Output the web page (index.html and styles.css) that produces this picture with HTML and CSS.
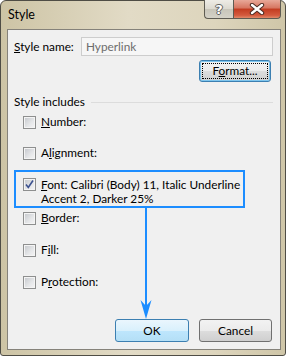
FILE: index.html
```html
<!DOCTYPE html>
<html lang="en">
<head>
    <meta charset="UTF-8">
    <meta name="viewport" content="width=device-width, initial-scale=1.0">
    <title>Style</title>
    <link rel="stylesheet" href="styles.css">
</head>
<body>
    <div class="window">
        <div class="titlebar">
            <span class="title">Style</span>
            <div class="caption-buttons">
                <span class="cap-btn help">?</span>
                <span class="cap-btn close">
                    <svg width="16" height="12" viewBox="0 0 16 12">
                        <path d="M3 2 L13 10 M13 2 L3 10" stroke="#4a2a22" stroke-width="4.4" stroke-linecap="round"/>
                        <path d="M3 2 L13 10 M13 2 L3 10" stroke="#ffffff" stroke-width="2.4" stroke-linecap="round"/>
                    </svg>
                </span>
            </div>
        </div>

        <div class="client">
            <div class="name-row">
                <label><u>S</u>tyle name:</label>
                <div class="name-input">Hyperlink</div>
            </div>
            <div class="format-row">
                <button class="btn btn-focus"><span class="focus-rect">F<u>o</u>rmat...</span></button>
            </div>

            <div class="group-title"><span>Style includes</span></div>

            <div class="includes">
                <div class="item item-number"><span class="check"></span><span><u>N</u>umber:</span></div>
                <div class="item item-align"><span class="check"></span><span>A<u>l</u>ignment:</span></div>
                <div class="item item-font">
                    <span class="check checked">
                        <svg width="11" height="11" viewBox="0 0 11 11">
                            <path d="M2 5.5 L4.3 8.5 L9 1.5" stroke="#3d5290" stroke-width="1.6" fill="none"/>
                        </svg>
                    </span>
                    <span class="font-text"><u>F</u>ont: Calibri (Body) 11, Italic Underline<br>Accent 2, Darker 25%</span>
                </div>
                <div class="item item-border"><span class="check"></span><span><u>B</u>order:</span></div>
                <div class="item item-fill"><span class="check"></span><span>F<u>i</u>ll:</span></div>
                <div class="item item-protect"><span class="check"></span><span>P<u>r</u>otection:</span></div>
            </div>

            <div class="actions">
                <button class="btn btn-ok">OK</button>
                <button class="btn btn-cancel">Cancel</button>
            </div>

            <!-- callout arrow from the highlighted option to OK -->
            <svg class="arrow" width="12" height="113" viewBox="0 0 12 113">
                <rect x="5" y="0" width="2" height="100" fill="#1c8dff"/>
                <path d="M0.5 93 L6 99 L11.5 93 L6 112 Z" fill="#1c8dff"/>
            </svg>
        </div>
    </div>
</body>
</html>
```

FILE: styles.css
```css
body {
    margin: 0;
    padding: 0;
    background-color: #ffffff;
    font-family: Lato, "Noto Sans", sans-serif;
    font-size: 11.8px;
    color: #000;
}

.window {
    width: 286px;
    height: 356px;
    box-sizing: border-box;
    border: 1px solid #4f4d45;
    border-radius: 6px 6px 3px 3px;
    background: linear-gradient(to right, #cdc4a5, #e2dbc6 45%, #ddd5bd 75%, #cfc6a8);
    display: flex;
    flex-direction: column;
}

.titlebar {
    height: 28px;
    display: flex;
    align-items: flex-start;
    padding-left: 7px;
}
.title {
    margin-top: 6px;
    line-height: 16px;
    font-size: 12.5px;
}

.caption-buttons {
    margin-left: auto;
    margin-right: 4px;
    margin-top: -1px;
    display: flex;
}
.cap-btn {
    height: 19px;
    box-sizing: border-box;
    border: 1px solid #5e5b52;
    border-top: none;
    display: flex;
    align-items: center;
    justify-content: center;
}
.help {
    width: 29px;
    border-radius: 0 0 0 4px;
    border-right: none;
    background: linear-gradient(#eeece6, #dcd9cf 50%, #c8c5b9 51%, #d5d2c7);
    color: #fff;
    font-weight: bold;
    font-size: 13px;
    font-family: "DejaVu Sans", sans-serif;
    text-shadow: 0 0 1px #555, 1px 0 0 #666, -1px 0 0 #666, 0 1px 0 #666, 0 -1px 0 #666;
}
.close {
    width: 48px;
    border-radius: 0 0 4px 0;
    background: linear-gradient(#e8a898, #d67560 45%, #c23b20 50%, #d45a3e 85%, #e08a6a);
}

.client {
    position: relative;
    flex: 1;
    margin: 0 4px 5px 6px;
    border: 1px solid #85827a;
    background-color: #f0f0f0;
    padding: 0 7px 0 6px;
}

.name-row {
    margin-top: 7px;
    height: 19px;
    display: flex;
    align-items: center;
}
.name-input {
    margin-left: auto;
    width: 192px;
    height: 19px;
    box-sizing: border-box;
    border: 1px solid #cdcdcd;
    background-color: #f6f6f6;
    color: #6d6d6d;
    padding-left: 4px;
    line-height: 17px;
}

.format-row {
    margin-top: 4px;
    display: flex;
    justify-content: flex-end;
    padding-right: 2px;
}

.btn {
    font-family: inherit;
    font-size: 11.8px;
    color: #000;
    height: 22px;
    box-sizing: border-box;
    border: 1px solid #707070;
    border-radius: 3px;
    background: linear-gradient(#f2f2f2, #ebebeb 50%, #dddddd 51%, #cfcfcf);
    padding: 0;
    margin: 0;
}
.btn-focus {
    width: 72px;
    border-color: #3c7fb1;
    box-shadow: inset 0 0 0 1px #7fc6ee;
    padding: 2px;
}
.focus-rect {
    display: block;
    height: 16px;
    line-height: 15px;
    outline: 1px dotted #000;
    outline-offset: -1px;
}

.group-title {
    margin-top: 12px;
    line-height: 16px;
    display: flex;
    align-items: center;
}
.group-title::after {
    content: "";
    flex: 1;
    height: 1px;
    background-color: #dcdcdc;
    margin-left: 6px;
}

.includes {
    display: flex;
    flex-direction: column;
}
.item {
    display: flex;
    align-items: center;
    height: 16px;
    line-height: 16px;
    padding-left: 9px;
}
.item-number { margin-top: 4px; }
.item-align { margin-top: 15px; }
.item-border { margin-top: 2px; }
.item-fill { margin-top: 16px; }
.item-protect { margin-top: 16px; }

.item-font {
    margin-top: 9px;
    height: auto;
    width: 231px;
    box-sizing: border-box;
    border: 2px solid #1c8dff;
    padding: 6px 0 0 7px;
    align-items: flex-start;
}
.font-text {
    line-height: 14px;
    white-space: nowrap;
}
.item-font .check {
    margin-top: 0;
}

.check {
    width: 13px;
    height: 13px;
    box-sizing: border-box;
    border: 1px solid #8e8f8f;
    box-shadow: inset 0 0 0 1px #f4f4f4;
    background: linear-gradient(135deg, #c3c6cb, #e6e7e9 60%, #f5f5f5);
    margin-right: 5px;
    flex-shrink: 0;
    display: flex;
    align-items: center;
    justify-content: center;
}

.actions {
    margin-top: 29px;
    display: flex;
    justify-content: flex-end;
    padding-right: 1px;
    gap: 10px;
}
.btn-ok,
.btn-cancel {
    height: 23px;
}
.btn-ok {
    width: 74px;
    border-color: #3c7fb1;
    background: linear-gradient(#eaf6fd, #d9f0fc 50%, #bee6fd 51%, #b4dff6);
}
.btn-cancel {
    width: 73px;
}

.arrow {
    position: absolute;
    left: 132px;
    top: 177px;
}
```
